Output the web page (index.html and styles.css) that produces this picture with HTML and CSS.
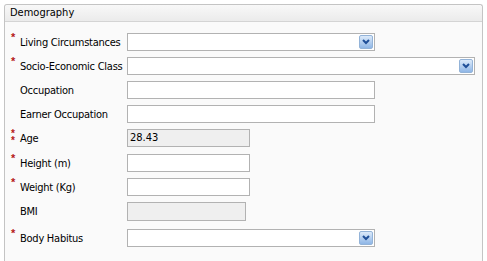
FILE: index.html
```html
<!DOCTYPE html>
<html lang="en">
<head>
    <meta charset="UTF-8">
    <title>Demography</title>
    <link rel="stylesheet" href="styles.css">
</head>
<body>
    <div class="panel">
        <div class="panel-header">Demography</div>
        <div class="panel-body">
            <div class="form-row">
                <span class="req">*</span>
                <label class="form-label">Living Circumstances</label>
                <div class="field field-combo w-medium"><span class="combo-btn"><svg width="8" height="6" viewBox="0 0 8 6"><path d="M1 1 L4 4 L7 1" fill="none" stroke-width="2"/></svg></span></div>
            </div>
            <div class="form-row">
                <span class="req">*</span>
                <label class="form-label">Socio-Economic Class</label>
                <div class="field field-combo w-wide"><span class="combo-btn"><svg width="8" height="6" viewBox="0 0 8 6"><path d="M1 1 L4 4 L7 1" fill="none" stroke-width="2"/></svg></span></div>
            </div>
            <div class="form-row">
                <span class="req"></span>
                <label class="form-label">Occupation</label>
                <div class="field w-medium"></div>
            </div>
            <div class="form-row">
                <span class="req"></span>
                <label class="form-label">Earner Occupation</label>
                <div class="field w-medium"></div>
            </div>
            <div class="form-row">
                <span class="req req-double"><span>*</span><span>*</span></span>
                <label class="form-label">Age</label>
                <div class="field field-readonly w-small">28.43</div>
            </div>
            <div class="form-row row-gap-extra">
                <span class="req">*</span>
                <label class="form-label">Height (m)</label>
                <div class="field w-small"></div>
            </div>
            <div class="form-row">
                <span class="req">*</span>
                <label class="form-label">Weight (Kg)</label>
                <div class="field w-small"></div>
            </div>
            <div class="form-row">
                <span class="req"></span>
                <label class="form-label">BMI</label>
                <div class="field field-readonly w-narrow tall"></div>
            </div>
            <div class="form-row row-gap-more">
                <span class="req">*</span>
                <label class="form-label">Body Habitus</label>
                <div class="field field-combo w-medium"><span class="combo-btn"><svg width="8" height="6" viewBox="0 0 8 6"><path d="M1 1 L4 4 L7 1" fill="none" stroke-width="2"/></svg></span></div>
            </div>
        </div>
    </div>
</body>
</html>
```

FILE: styles.css
```css
body {
    margin: 0;
    background: #ffffff;
    font-family: Tahoma, 'DejaVu Sans Condensed', 'Liberation Sans', sans-serif;
    font-size: 11px;
    color: #000;
}

.panel {
    margin: 4px 4px 0 4px;
    border: 1px solid #c4c4c4;
    border-bottom: none;
    border-radius: 3px 3px 0 0;
    background: #fafafa;
    height: 260px;
}

.panel-header {
    height: 16px;
    line-height: 16px;
    padding-left: 5px;
    background: linear-gradient(#f8f8f8, #ebebeb);
    border-bottom: 1px solid #d4d4d4;
    border-radius: 3px 3px 0 0;
}

.panel-body {
    display: flex;
    flex-direction: column;
    gap: 6px;
    padding-top: 11px;
}

.form-row {
    display: flex;
    align-items: center;
    height: 18px;
}

.row-gap-extra {
    margin-top: 1px;
}

.row-gap-more {
    margin-top: 3px;
}

.req {
    width: 9px;
    margin-left: 6px;
    align-self: flex-start;
    color: #b51818;
    font-family: 'Liberation Sans', sans-serif;
    font-size: 11px;
    line-height: 9px;
    font-weight: bold;
}

.req-double {
    display: flex;
    flex-direction: column;
}

.req-double span {
    height: 7px;
    line-height: 9px;
    font-size: 10px;
}

.form-label {
    width: 107px;
    white-space: nowrap;
    letter-spacing: -0.25px;
}

.field {
    box-sizing: border-box;
    height: 18px;
    line-height: 16px;
    padding-left: 2px;
    border: 1px solid #b2b2b2;
    background: #ffffff;
    position: relative;
}

.field-readonly {
    background: #efefef;
}

.tall {
    height: 19px;
    align-self: flex-start;
}

.w-medium { width: 248px; }
.w-wide { width: 348px; }
.w-small { width: 123px; }
.w-narrow { width: 119px; }

.combo-btn {
    position: absolute;
    right: 1px;
    top: 1px;
    width: 14px;
    height: 14px;
    box-sizing: border-box;
    border: 1px solid #93b3d8;
    border-radius: 2px;
    background: linear-gradient(#dceafa, #8fb6e6);
    display: flex;
    align-items: center;
    justify-content: center;
}

.combo-btn svg path {
    stroke: #1f4f98;
}
```
